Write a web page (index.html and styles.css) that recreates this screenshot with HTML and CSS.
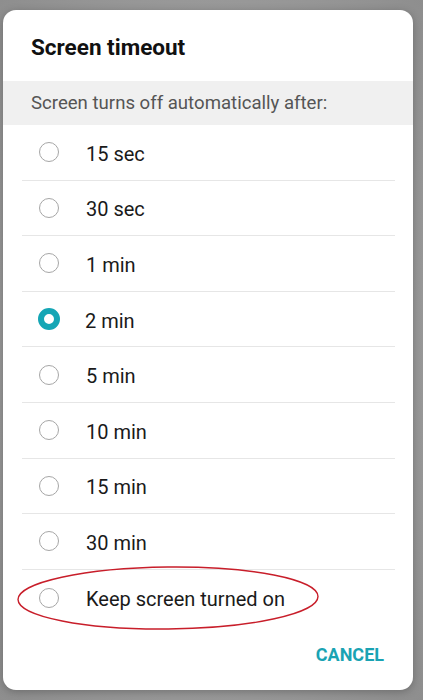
FILE: index.html
```html
<!DOCTYPE html>
<html lang="en">
<head>
    <meta charset="UTF-8">
    <meta name="viewport" content="width=device-width, initial-scale=1.0">
    <title>Screen timeout</title>
    <link rel="stylesheet" href="styles.css">
</head>
<body>
    <div class="dialog">
        <h1 class="dialog-title">Screen timeout</h1>
        <div class="dialog-subtitle">Screen turns off automatically after:</div>
        <ul class="option-list">
            <li class="option"><span class="radio"></span><span class="label">15 sec</span></li>
            <li class="option"><span class="radio"></span><span class="label">30 sec</span></li>
            <li class="option"><span class="radio"></span><span class="label">1 min</span></li>
            <li class="option"><span class="radio checked"></span><span class="label">2 min</span></li>
            <li class="option"><span class="radio"></span><span class="label">5 min</span></li>
            <li class="option"><span class="radio"></span><span class="label">10 min</span></li>
            <li class="option"><span class="radio"></span><span class="label">15 min</span></li>
            <li class="option"><span class="radio"></span><span class="label">30 min</span></li>
            <li class="option"><span class="radio"></span><span class="label">Keep screen turned on</span></li>
        </ul>
        <div class="dialog-actions">
            <button class="text-button">CANCEL</button>
        </div>
        <!-- hand-drawn highlight -->
        <svg class="highlight" width="310" height="70" viewBox="0 0 310 70">
            <ellipse cx="155" cy="35" rx="150" ry="31" fill="none" stroke="#c81e2a" stroke-width="1.4" transform="rotate(-0.6 155 35)"/>
        </svg>
    </div>
</body>
</html>
```

FILE: styles.css
```css
* {
    box-sizing: border-box;
}
body {
    margin: 0;
    height: 700px;
    padding: 10px 10px 0 3px;
    background: radial-gradient(ellipse at center, #a8a8a8 0%, #9c9c9c 60%, #8e8e8e 100%);
    font-family: Roboto, "Noto Sans", sans-serif;
    overflow: hidden;
}
.dialog {
    position: relative;
    width: 410px;
    height: 680px;
    background-color: white;
    border-radius: 13px;
    box-shadow: 0 2px 8px rgba(0,0,0,0.25);
}
.dialog-title {
    margin: 0;
    padding: 25px 28px 21px;
    font-size: 22.5px;
    line-height: 25px;
    font-weight: bold;
    color: #111;
}
.dialog-subtitle {
    height: 44px;
    line-height: 44px;
    padding-left: 28px;
    background-color: #f0f0f0;
    font-size: 18.6px;
    color: #555;
}
.option-list {
    list-style: none;
    margin: 0 18px 0 19px;
    padding: 0;
}
.option {
    display: flex;
    align-items: center;
    height: 55.6px;
    border-bottom: 1px solid #e6e6e6;
}
.option:last-child {
    border-bottom: none;
}
.radio {
    width: 20px;
    height: 20px;
    margin-left: 17px;
    border: 1.3px solid #a6a6a6;
    border-radius: 50%;
    flex-shrink: 0;
}
.radio.checked {
    width: 22px;
    height: 22px;
    margin-left: 16px;
    margin-right: -2px;
    border: 6px solid #15a6b5;
}
.label {
    margin-left: 27px;
    padding-top: 3px;
    font-size: 20px;
    color: #1a1a1a;
}
.dialog-actions {
    display: flex;
    justify-content: flex-end;
    padding: 18px 29px 0 0;
}
.text-button {
    background: none;
    border: none;
    padding: 0;
    font-family: Roboto, "Noto Sans", sans-serif;
    font-size: 18px;
    font-weight: bold;
    color: #1aa3b3;
    line-height: 24px;
    cursor: pointer;
}
.highlight {
    position: absolute;
    left: 10px;
    top: 553px;
}
```
